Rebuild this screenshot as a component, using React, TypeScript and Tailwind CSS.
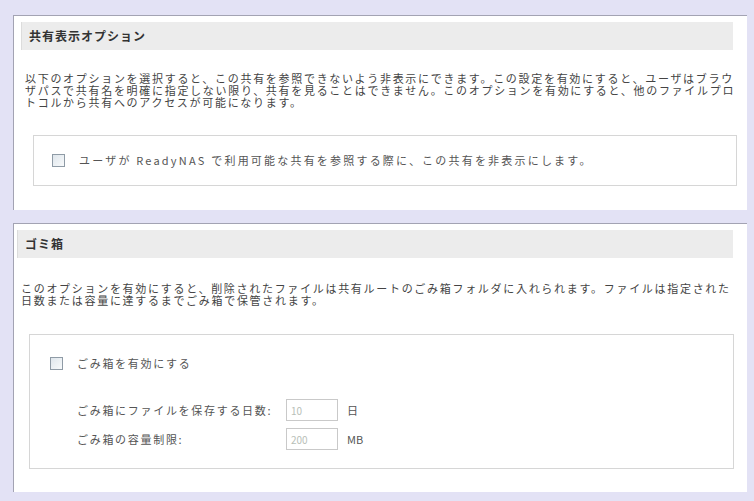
import React from "react";

const jp = { fontFamily: '"Noto Sans CJK JP", "Noto Sans", sans-serif' };

const Checkbox = () => (
  <span className="inline-block w-[13px] h-[13px] shrink-0 border border-[#8f9ba6] bg-gradient-to-br from-[#dfe6ec] to-[#f8fafb]" />
);

const Header = ({ title }: { title: string }) => (
  <div className="h-[28px] flex items-center bg-[#ececec] border-l border-[#dcdcdc] pl-[7px]">
    <span className="text-[12px] font-bold tracking-[1px] text-[#333]">{title}</span>
  </div>
);

const App: React.FC = () => {
  return (
    <div className="w-[754px] h-[501px] bg-[#e3e2f5] pt-[15px] pl-[13px] pr-[7px] overflow-hidden" style={jp}>
      {/* 共有表示オプション */}
      <div className="bg-white border-t border-l border-[#a3a3b3] pt-[6px] pl-[7px] pr-[14px] pb-[24px]">
        <Header title="共有表示オプション" />
        <p className="mt-[22px] ml-[4px] text-[11px] leading-[12px] tracking-[1.7px] text-[#444] whitespace-nowrap">
          以下のオプションを選択すると、この共有を参照できないよう非表示にできます。この設定を有効にすると、ユーザはブラウ
          <br />
          ザパスで共有名を明確に指定しない限り、共有を見ることはできません。このオプションを有効にすると、他のファイルプロ
          <br />
          トコルから共有へのアクセスが可能になります。
        </p>
        <div className="mt-[27px] ml-[12px] -mr-[4px] h-[51px] border border-[#d6d6d6] flex items-center pl-[18px]">
          <Checkbox />
          <span className="ml-[14px] text-[11px] tracking-[2.2px] text-[#555] whitespace-nowrap">
            ユーザが ReadyNAS で利用可能な共有を参照する際に、この共有を非表示にします。
          </span>
        </div>
      </div>

      {/* ゴミ箱 */}
      <div className="mt-[13px] bg-white border-t border-l border-[#a3a3b3] pt-[6px] pl-[3px] pr-[14px] pb-[23px]">
        <Header title="ゴミ箱" />
        <p className="mt-[24px] ml-[4px] text-[11px] leading-[12px] tracking-[1.7px] text-[#444] whitespace-nowrap">
          このオプションを有効にすると、削除されたファイルは共有ルートのごみ箱フォルダに入れられます。ファイルは指定された
          <br />
          日数または容量に達するまでごみ箱で保管されます。
        </p>
        <div className="mt-[28px] ml-[12px] -mr-[1px] border border-[#d6d6d6] pt-[21px] pb-[18px] pl-[20px]">
          <div className="flex items-center h-[14px]">
            <Checkbox />
            <span className="ml-[14px] text-[11px] tracking-[1.7px] text-[#555] whitespace-nowrap">ごみ箱を有効にする</span>
          </div>
          <div className="mt-[29px] flex flex-col gap-[7px] pl-[27px] text-[11px] tracking-[1.7px] text-[#555]">
            <div className="flex items-center">
              <span className="w-[209px] whitespace-nowrap">ごみ箱にファイルを保存する日数:</span>
              <span className="w-[52px] h-[22px] border border-[#c9c9c9] flex items-center pl-[4px] text-[10px] tracking-normal text-[#b8c0b8]">10</span>
              <span className="ml-[9px]">日</span>
            </div>
            <div className="flex items-center">
              <span className="w-[209px] whitespace-nowrap">ごみ箱の容量制限:</span>
              <span className="w-[52px] h-[22px] border border-[#c9c9c9] flex items-center pl-[4px] text-[10px] tracking-normal text-[#b8c0b8]">200</span>
              <span className="ml-[9px] tracking-normal">MB</span>
            </div>
          </div>
        </div>
      </div>
    </div>
  );
};

export default App;
